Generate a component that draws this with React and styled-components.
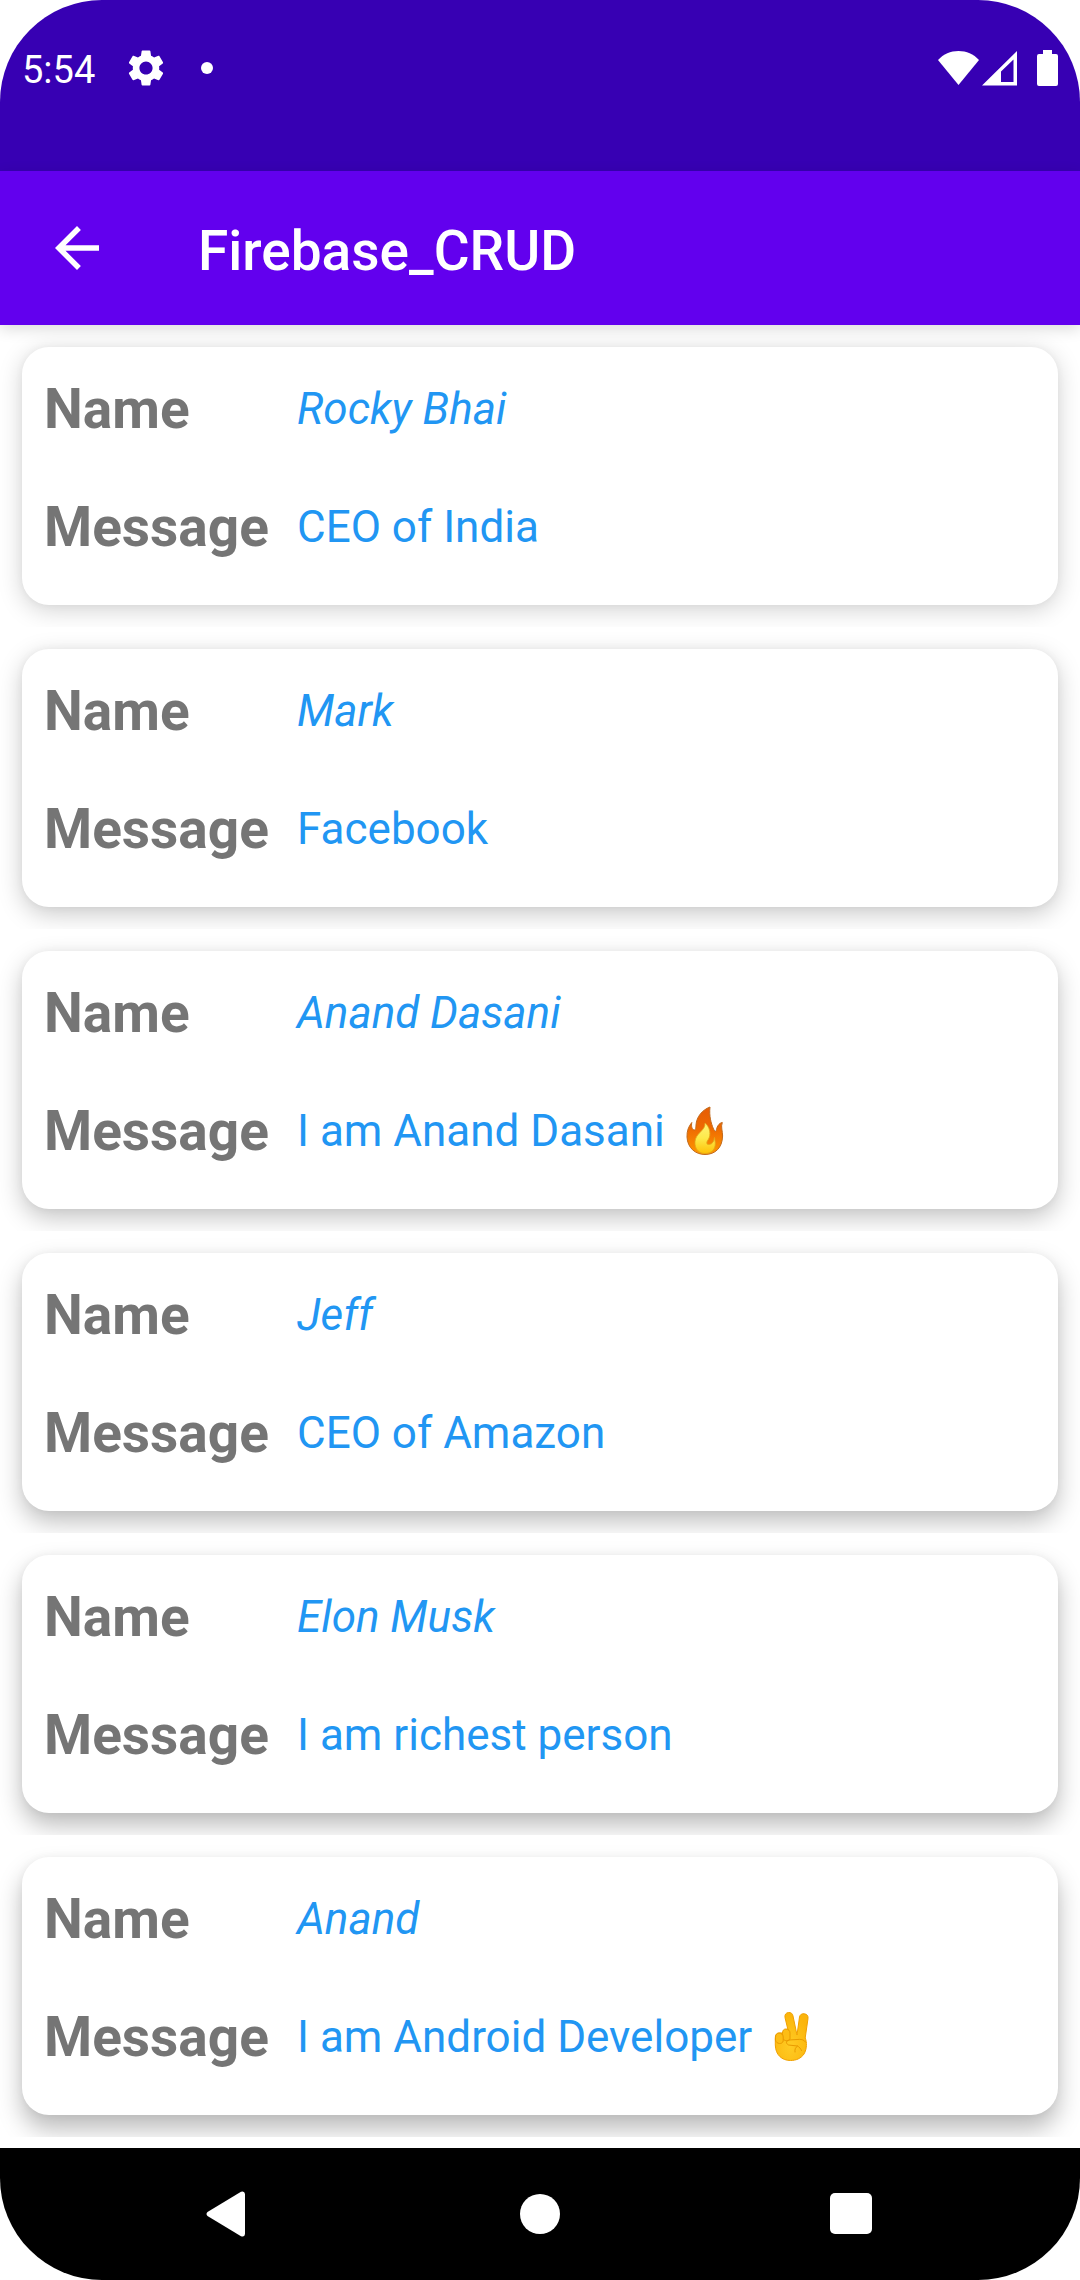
import React from "react";
import styled, { createGlobalStyle } from "styled-components";

const GlobalStyle = createGlobalStyle`
  *, *::before, *::after { box-sizing: border-box; }
  body {
    margin: 0;
    background: #ffffff;
    font-family: Roboto, "Liberation Sans", sans-serif;
  }
  svg { display: block; flex: none; }
`;

const Screen = styled.div`
  display: flex;
  flex-direction: column;
  min-height: 100vh;
  overflow: hidden;
  border-radius: 102px;
  background: #ffffff;
`;

const StatusBar = styled.div`
  display: flex;
  align-items: center;
  justify-content: space-between;
  padding: 0 22px 36px;
  min-height: 171px;
  background: #3700b3;
  color: #ffffff;
`;

const StatusGroup = styled.div`
  display: flex;
  align-items: center;
  gap: ${({ $gap }) => $gap}px;
`;

const Clock = styled.time`
  font-size: 38px;
  line-height: 44px;
  padding-top: 4px;
`;

const AppBar = styled.header`
  position: relative;
  z-index: 1;
  display: flex;
  align-items: center;
  gap: 88px;
  min-height: 154px;
  padding: 0 44px;
  background: #6200ee;
  color: #ffffff;
  box-shadow: 0 4px 14px rgba(0, 0, 0, 0.14);
`;

const IconButton = styled.button`
  display: flex;
  align-items: center;
  justify-content: center;
  padding: 0;
  border: 0;
  background: transparent;
  color: inherit;
`;

const Title = styled.h1`
  margin: 0;
  padding-top: 5px;
  font-size: 55px;
  line-height: 64px;
  font-weight: 500;
`;

const RecordList = styled.ul`
  flex: 1;
  margin: 0;
  padding: 0;
  list-style: none;
`;

const RecordItem = styled.li`
  padding: 22px;
  overflow: hidden;
`;

const Card = styled.dl`
  display: grid;
  row-gap: 44px;
  margin: 0;
  padding: 25px 22px 41px;
  border-radius: 27px;
  background: #ffffff;
  box-shadow:
    0 ${({ $depth }) => $depth}px 24px rgba(0, 0, 0, ${({ $shade }) => $shade}),
    0 0 8px rgba(0, 0, 0, 0.04);
`;

const Field = styled.div`
  display: grid;
  grid-template-columns: 253px 1fr;
  align-items: center;
`;

const Label = styled.dt`
  color: #757575;
  font-size: 55px;
  line-height: 74px;
  font-weight: 700;
`;

const Value = styled.dd`
  display: flex;
  align-items: center;
  gap: 12px;
  margin: 0;
  color: #2196f3;
  font-size: 44px;
  line-height: 52px;
  font-style: ${({ $italic }) => ($italic ? "italic" : "normal")};
`;

const NavBar = styled.nav`
  display: flex;
  min-height: 132px;
  padding: 0 72px;
  background: #000000;
  color: #ffffff;
`;

const NavButton = styled(IconButton)`
  flex: 1;
`;

const GearIcon = () => (
  <svg width="44" height="44" viewBox="0 0 24 24" fill="currentColor" aria-hidden="true">
    <path d="M19.14 12.94c.04-.3.06-.61.06-.94 0-.32-.02-.64-.07-.94l2.03-1.58c.18-.14.23-.41.12-.61l-1.92-3.32c-.12-.22-.37-.29-.59-.22l-2.39.96c-.5-.38-1.03-.7-1.62-.94l-.36-2.54c-.04-.24-.24-.41-.48-.41h-3.84c-.24 0-.43.17-.47.41l-.36 2.54c-.59.24-1.13.57-1.62.94l-2.39-.96c-.22-.08-.47 0-.59.22L2.74 8.87c-.12.21-.08.47.12.61l2.03 1.58c-.05.3-.09.63-.09.94s.02.64.07.94l-2.03 1.58c-.18.14-.23.41-.12.61l1.92 3.32c.12.22.37.29.59.22l2.39-.96c.5.38 1.03.7 1.62.94l.36 2.54c.05.24.24.41.48.41h3.84c.24 0 .44-.17.47-.41l.36-2.54c.59-.24 1.13-.56 1.62-.94l2.39.96c.22.08.47 0 .59-.22l1.92-3.32c.12-.22.07-.47-.12-.61l-2.01-1.58zM12 15.6c-1.98 0-3.6-1.62-3.6-3.6s1.62-3.6 3.6-3.6 3.6 1.62 3.6 3.6-1.62 3.6-3.6 3.6z" />
  </svg>
);

const DotIcon = () => (
  <svg width="12" height="12" viewBox="0 0 12 12" fill="currentColor" aria-hidden="true">
    <circle cx="6" cy="6" r="6" />
  </svg>
);

const WifiIcon = () => (
  <svg width="41" height="36" viewBox="0 0 41 36" fill="currentColor" aria-hidden="true">
    <path d="M0 10C5.500 4 12.500 1 20.500 1S35.500 4 41 10L20.500 35Z" />
  </svg>
);

const SignalIcon = () => (
  <svg width="35" height="36" viewBox="0 0 35 36" fill="currentColor" aria-hidden="true">
    <path fillRule="evenodd" d="M35 1V35.500H0ZM31.500 9.500L19 21.500V32H31.500Z" />
  </svg>
);

const BatteryIcon = () => (
  <svg width="21" height="36" viewBox="0 0 21 36" fill="currentColor" aria-hidden="true">
    <path d="M6 0H15V4H19Q21 4 21 6V34Q21 36 19 36H2Q0 36 0 34V6Q0 4 2 4H6Z" />
  </svg>
);

const BackArrow = () => (
  <svg width="66" height="66" viewBox="0 0 24 24" fill="currentColor" aria-hidden="true">
    <path d="M20 11H7.83l5.59-5.59L12 4l-8 8 8 8 1.41-1.41L7.83 13H20v-2z" />
  </svg>
);

const FireEmoji = () => (
  <svg width="56" height="52" viewBox="0 0 56 52" role="img" aria-label="fire">
    <defs>
      <linearGradient id="flame" x1="0" y1="0" x2="0" y2="1">
        <stop offset="0" stopColor="#e65c05" />
        <stop offset="0.45" stopColor="#ee6a02" />
        <stop offset="1" stopColor="#ff9800" />
      </linearGradient>
      <linearGradient id="core" x1="0" y1="0" x2="0" y2="1">
        <stop offset="0" stopColor="#fff176" />
        <stop offset="0.5" stopColor="#fdea4a" />
        <stop offset="1" stopColor="#ffc107" />
      </linearGradient>
    </defs>
    <path
      d="M33 2C25 5 19.500 12 19 20C19 23 18.500 25 17.500 25C15 25 14 21 14.800 17.500C11.500 21.500 9.800 26 10 32C10.500 43 18.500 49.500 28 49.500C38 49.500 45.300 43 45.600 31C45.700 26 43.500 22 45.300 17.500C41.500 18 39.500 23 39.300 25.500C38.500 27 37.500 26 36.500 24C34 18 32 11 33 2Z"
      fill="url(#flame)"
      stroke="#c26a1c"
      strokeWidth="1"
    />
    <path
      d="M28 18C28.500 25 21 27 18.500 34C16.500 41 20 48.500 28 48.500C35 48.500 38.500 44 38.300 38C38.200 36 37.500 34 37.500 32.500C37 36.500 35.500 39 32.500 39.500C29.500 40 29 37.500 31 35C34.500 30 33 22 28 18Z"
      fill="url(#core)"
      stroke="#e0a81c"
      strokeWidth="0.800"
    />
  </svg>
);

const VictoryEmoji = () => (
  <svg width="56" height="52" viewBox="0 0 56 52" role="img" aria-label="victory hand">
    <defs>
      <radialGradient id="palm" cx="0.450" cy="0.700" r="0.650">
        <stop offset="0" stopColor="#ffcb23" />
        <stop offset="1" stopColor="#fbb50c" />
      </radialGradient>
    </defs>
    <path
      d="M21 6.500C20.500 3.500 22 1.800 24.500 1.500C27 1.300 28.500 2.500 29 5L33 24L35.500 6C36 3.500 38 2.300 40.500 2.800C43.300 3.300 44.300 5 44 7.500L41.200 27C43 31 43 38 40 43C37 47.500 32 49.500 26.500 49.500C18 49.500 11.500 44 11.300 34V27C11.300 23 14 21.500 18 22L24 19Z"
      fill="url(#palm)"
      stroke="#f0a000"
      strokeWidth="1"
      strokeLinejoin="round"
    />
    <g fill="#fdbd15" stroke="#e99a00" strokeWidth="1" strokeLinecap="round" strokeLinejoin="round">
      <path d="M18.500 22C18.500 19 20 18 22 18C24.500 18 26 20 26 22V28C25 30.500 21 30.500 19 28Z" />
      <path d="M11.500 26C11.500 23 13 22 15 22C17.500 22 19 23.500 19.200 26V30C18.500 33.500 12.500 33.500 11.500 29.500Z" />
      <path d="M41.500 31C40 28.500 37 28 33 28.500L25 29C22 29.500 21.500 32.500 24.500 34L33.500 35C31.500 36.500 30.500 38.500 31 41M33.500 35C35.500 36 37 38 37.500 39.500" fill="none" />
    </g>
  </svg>
);

const emojis = { fire: FireEmoji, victory: VictoryEmoji };

const records = [
  { name: "Rocky Bhai", message: "CEO of India", depth: 5, shade: 0.18 },
  { name: "Mark", message: "Facebook", depth: 7, shade: 0.21 },
  { name: "Anand Dasani", message: "I am Anand Dasani", emoji: "fire", depth: 9, shade: 0.23 },
  { name: "Jeff", message: "CEO of Amazon", depth: 11, shade: 0.25 },
  { name: "Elon Musk", message: "I am richest person", depth: 12, shade: 0.27 },
  { name: "Anand", message: "I am Android Developer", emoji: "victory", depth: 14, shade: 0.27 },
];

function Record({ name, message, emoji, depth, shade }) {
  const Emoji = emojis[emoji];
  return (
    <RecordItem>
      <Card $depth={depth} $shade={shade}>
        <Field>
          <Label>Name</Label>
          <Value $italic>{name}</Value>
        </Field>
        <Field>
          <Label>Message</Label>
          <Value>
            <span>{message}</span>
            {Emoji && <Emoji />}
          </Value>
        </Field>
      </Card>
    </RecordItem>
  );
}

export default function App() {
  return (
    <>
      <GlobalStyle />
      <Screen>
        <StatusBar>
          <StatusGroup $gap={29}>
            <Clock>5:54</Clock>
            <StatusGroup $gap={33}>
              <GearIcon />
              <DotIcon />
            </StatusGroup>
          </StatusGroup>
          <StatusGroup $gap={20}>
            <StatusGroup $gap={3}>
              <WifiIcon />
              <SignalIcon />
            </StatusGroup>
            <BatteryIcon />
          </StatusGroup>
        </StatusBar>
        <AppBar>
          <IconButton type="button" aria-label="Navigate up">
            <BackArrow />
          </IconButton>
          <Title>Firebase_CRUD</Title>
        </AppBar>
        <RecordList>
          {records.map((record) => (
            <Record key={record.name} {...record} />
          ))}
        </RecordList>
        <NavBar aria-label="System">
          <NavButton type="button" aria-label="Back">
            <svg width="46" height="46" viewBox="0 0 46 46" fill="currentColor" aria-hidden="true">
              <path d="M2.500 21L36 0.800Q39.500 -0.500 40 3V43Q39.500 46.500 36 45.200L2.500 25Q0.500 23 2.500 21Z" />
            </svg>
          </NavButton>
          <NavButton type="button" aria-label="Home">
            <svg width="40" height="40" viewBox="0 0 40 40" fill="currentColor" aria-hidden="true">
              <circle cx="20" cy="20" r="20" />
            </svg>
          </NavButton>
          <NavButton type="button" aria-label="Overview">
            <svg width="44" height="42" viewBox="0 0 44 42" fill="currentColor" aria-hidden="true">
              <rect width="42" height="41" rx="5" />
            </svg>
          </NavButton>
        </NavBar>
      </Screen>
    </>
  );
}
